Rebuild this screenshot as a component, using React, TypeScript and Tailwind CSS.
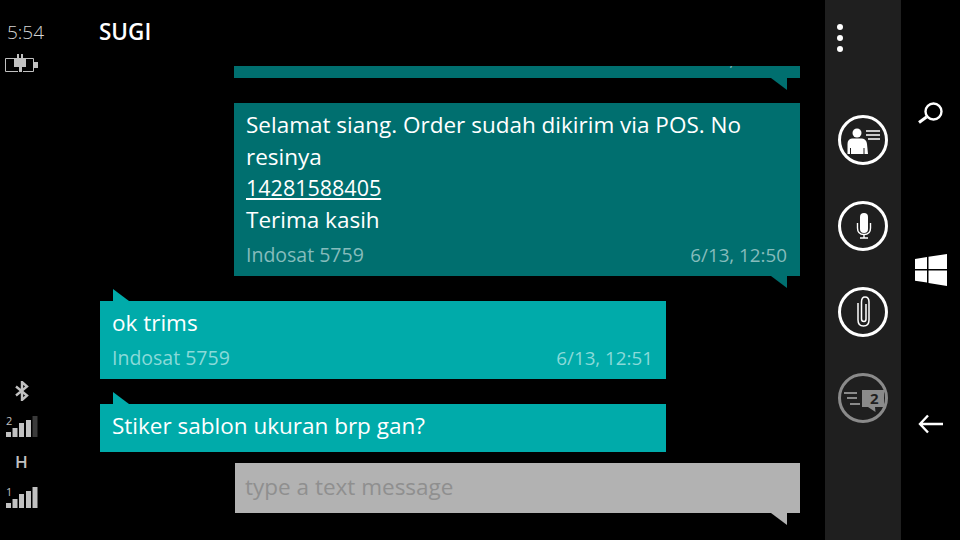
import type { ReactNode } from 'react'

const FONT = 'font-["Open_Sans","Noto_Sans",sans-serif]'

function TailRight({ color }: { color: string }) {
  return (
    <div className="flex justify-end pr-[13px]">
      <svg width="16" height="12" viewBox="0 0 16 12" className={color}>
        <polygon points="0,0 16,0 16,12" fill="currentColor" />
      </svg>
    </div>
  )
}

function TailLeft() {
  return (
    <div className="flex pl-[13px] h-3">
      <svg width="16" height="12" viewBox="0 0 16 12" className="text-[#00abaa]">
        <polygon points="0,0 16,12 0,12" fill="currentColor" />
      </svg>
    </div>
  )
}

function Meta({ left, right, className }: { left: string; right: string; className: string }) {
  return (
    <div className={`flex justify-between leading-[28px] ${className}`}>
      <span className="text-[19.5px]">{left}</span>
      <span className="text-[18.800px]">{right}</span>
    </div>
  )
}

function Circle({ children, dim }: { children: ReactNode; dim?: boolean }) {
  return (
    <svg width="52" height="52" viewBox="0 0 52 52" className={dim ? 'text-[#8a8a8a]' : 'text-white'}>
      <circle cx="26" cy="26" r="23.500" fill="none" stroke="currentColor" strokeWidth="3" />
      {children}
    </svg>
  )
}

function StatusBars({ n, dimLast }: { n: string; dimLast?: boolean }) {
  return (
    <div className="relative w-[32px] h-[21px] text-[#c4c4c4]">
      <span className="absolute left-0 -top-[1px] text-[11px] leading-[11px]">{n}</span>
      <svg width="32" height="21" viewBox="0 0 32 21">
        <rect x="0" y="16" width="5" height="5" fill="currentColor" />
        <rect x="6.500" y="12" width="5" height="9" fill="currentColor" />
        <rect x="13" y="7" width="5" height="14" fill="currentColor" />
        <rect x="20" y="4" width="5" height="17" fill="currentColor" />
        <rect x="26.500" y="0" width="5" height="21" fill="currentColor" opacity={dimLast ? 0.3 : 1} />
      </svg>
    </div>
  )
}

export default function App() {
  return (
    <div className={`w-[960px] h-[540px] bg-black flex overflow-hidden text-white ${FONT}`}>
      {/* status column */}
      <div className="w-[100px] flex flex-col opacity-[0.99]">
        <div className="pl-[7px] pt-[19px] text-[19px] leading-[26px] font-light text-[#d8d8d8]">5:54</div>
        <svg width="33" height="18" viewBox="0 0 33 18" className="ml-[5px] mt-[9px] text-[#c4c4c4]">
          <path d="M9 4.500H0.500V17.500H13M21 4.500H28.500V17.500H18" fill="none" stroke="currentColor" />
          <rect x="29" y="8" width="4" height="6" fill="currentColor" />
          <rect x="9" y="4" width="12" height="9" fill="currentColor" />
          <rect x="12" y="0" width="2" height="4" fill="currentColor" />
          <rect x="16" y="0" width="2" height="4" fill="currentColor" />
          <rect x="14" y="13" width="3" height="5" fill="currentColor" />
        </svg>
        <div className="mt-auto pb-[32px] flex flex-col items-start pl-[6px]">
          <svg width="14" height="20" viewBox="0 0 14 20" className="ml-[9px] text-[#c4c4c4]">
            <path d="M1 5.500L12 14.500L7 19V1L12 5.500L1 14.500" fill="none" stroke="currentColor" strokeWidth="2.400" />
          </svg>
          <div className="mt-[15px]"><StatusBars n="2" dimLast /></div>
          <div className="ml-[9px] mt-[13px] text-[17px] leading-[24px] font-semibold text-[#c4c4c4]">H</div>
          <div className="mt-[13px]"><StatusBars n="1" /></div>
        </div>
      </div>

      {/* conversation */}
      <div className="w-[725px] flex flex-col">
        <div className="h-[66px] pt-[17px] -ml-px text-[22.5px] leading-[30px] font-semibold">SUGI</div>

        <div className="ml-[134px] w-[566px]">
          <div className="h-3 bg-[#006f6f] overflow-hidden px-[13px]">
            <Meta left="Indosat 5759" right="6/13, 12:49" className="text-[#7fb7b7] -mt-[21px]" />
          </div>
          <TailRight color="text-[#006f6f]" />
        </div>

        <div className="ml-[134px] w-[566px] mt-[13px]">
          <div className="h-[173px] bg-[#006f6f] pl-[12px] pr-[13px] pt-[6px] text-[22.5px] leading-[31.500px]">
            <p>Selamat siang. Order sudah dikirim via POS. No resinya</p>
            <p className="underline text-[21.500px]">14281588405</p>
            <p>Terima kasih</p>
            <Meta left="Indosat 5759" right="6/13, 12:50" className="text-[#86bcbc] mt-[6px]" />
          </div>
          <TailRight color="text-[#006f6f]" />
        </div>

        <div className="w-[566px] mt-px">
          <TailLeft />
          <div className="h-[78px] bg-[#00abaa] pl-[12px] pr-[13px] pt-[6px] text-[22.5px] leading-[31.500px]">
            <p>ok trims</p>
            <Meta left="Indosat 5759" right="6/13, 12:51" className="text-[#8adad9] mt-[5px]" />
          </div>
        </div>

        <div className="w-[566px] mt-[13px]">
          <TailLeft />
          <div className="h-[48px] bg-[#00abaa] px-[12px] pt-[6px] text-[22.5px] leading-[31.500px]">
            <p>Stiker sablon ukuran brp gan?</p>
          </div>
        </div>

        <div className="ml-[135px] w-[565px] mt-[11px]">
          <div className="h-[50px] bg-[#b2b2b2] px-[10px] pt-[8px] text-[22.5px] leading-[31.500px] text-[#8f8f8f]">
            type a text message
          </div>
          <TailRight color="text-[#b2b2b2]" />
        </div>
      </div>

      {/* app bar */}
      <div className="w-[76px] bg-[#1f1f1f] flex flex-col items-center">
        <div className="self-start ml-[12px] mt-[24px] flex flex-col gap-[5px]">
          <div className="w-[6px] h-[6px] rounded-full bg-white" />
          <div className="w-[6px] h-[6px] rounded-full bg-white" />
          <div className="w-[6px] h-[6px] rounded-full bg-white" />
        </div>
        <div className="mt-[62px] flex flex-col gap-[34px]">
          <Circle>
            <circle cx="20" cy="19" r="4.500" fill="currentColor" />
            <path d="M10.500 40V30Q10.500 25 15 24.500H25Q29.500 25 30 30L31 40H27.500V34H26.500V40H14V34H13V40Z" fill="currentColor" />
            <path d="M29 17H43M29 21H43M31 25H43" stroke="currentColor" strokeWidth="1.500" fill="none" />
          </Circle>
          <Circle>
            <rect x="23" y="13" width="8" height="20" rx="4" fill="currentColor" />
            <path d="M20.500 23V28Q20.500 34.500 27 34.500Q33.500 34.500 33.500 28V23M27 34.500V38M23 38H31" fill="none" stroke="currentColor" strokeWidth="1.400" />
          </Circle>
          <Circle>
            <path d="M21 17V34Q21 40 26.500 40Q32 40 32 34V16Q32 11 28 11Q24.500 11 24.500 16V33Q24.500 35.500 27 35.500Q29 35.500 29 33V18" fill="none" stroke="currentColor" strokeWidth="1.500" />
          </Circle>
          <Circle dim>
            <path d="M7 21H20M10 26H20M13 32H23" stroke="currentColor" strokeWidth="2" fill="none" />
            <path d="M25 18H47V35H38L38.500 40L31 35H25Z" fill="currentColor" />
            <text x="33" y="32" fontSize="15" fontWeight="700" fill="#1f1f1f" fontFamily="Open Sans">2</text>
          </Circle>
        </div>
      </div>

      {/* hardware nav */}
      <div className="w-[59px] flex flex-col items-center">
        <svg width="26" height="22" viewBox="0 0 26 22" className="mt-[102px] ml-px">
          <circle cx="15.500" cy="9.500" r="8" fill="none" stroke="white" strokeWidth="2.400" />
          <path d="M8.500 15L1 20.500" stroke="white" strokeWidth="3" />
        </svg>
        <svg width="34" height="32" viewBox="0 0 34 32" className="mt-[130px]">
          <path d="M1 5L13 3V15H1ZM14.500 2.800L33 0V15H14.500ZM1 16.500H13V28.500L1 26.800ZM14.500 16.500H33V32L14.500 29Z" fill="white" />
        </svg>
        <svg width="26" height="20" viewBox="0 0 26 20" className="mt-[128px]">
          <path d="M10 1.500L2 10L10 18.500M2 10H25" fill="none" stroke="white" strokeWidth="2.400" />
        </svg>
      </div>
    </div>
  )
}
